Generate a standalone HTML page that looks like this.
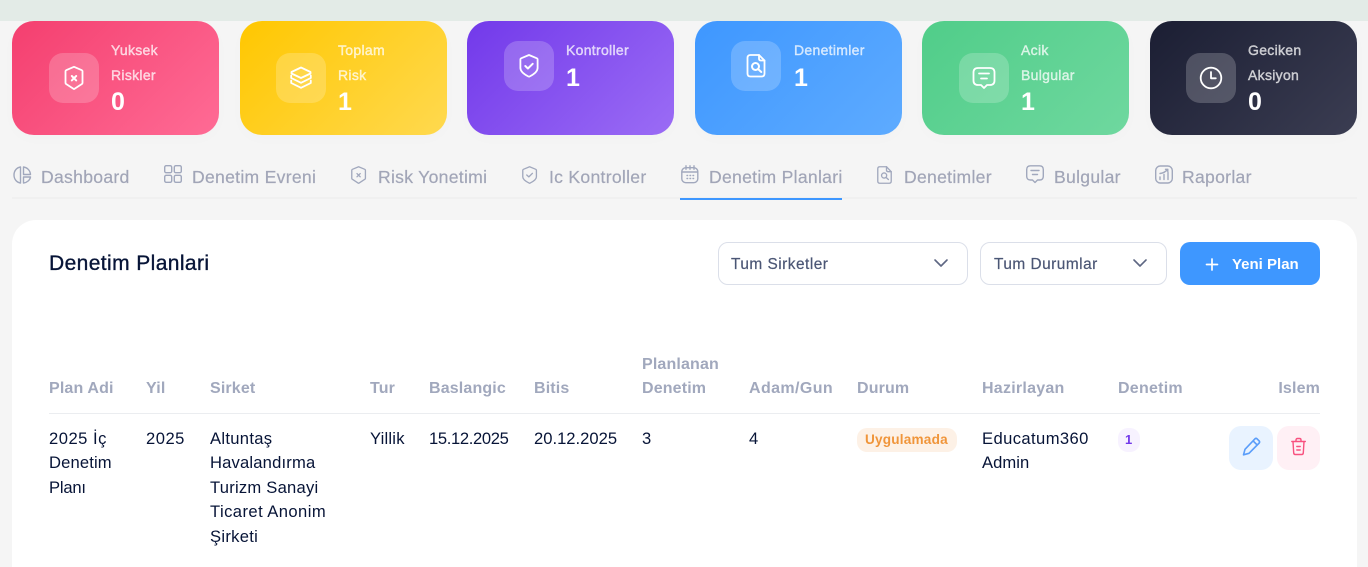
<!DOCTYPE html>
<html lang="tr"><head><meta charset="utf-8"><title>Denetim Planlari</title>
<style>
html,body{margin:0;padding:0;background:#f5f5f5;width:1368px;height:567px;overflow:hidden;}
body{position:relative;font-family:"Liberation Sans",sans-serif;}
#p{position:absolute;left:0;top:0;width:1368px;height:567px;overflow:hidden;}
.a{position:absolute;}
.t{position:absolute;white-space:nowrap;line-height:20px;height:20px;}
.card{position:absolute;top:21px;width:207px;height:114px;border-radius:22px;box-shadow:0 4px 14px rgba(0,0,0,.015);}
.ib{position:absolute;width:50px;height:50px;border-radius:14px;background:rgba(255,255,255,.2);}
.ib svg{position:absolute;left:10px;top:10px;}
.l{color:rgba(255,255,255,.7);font-size:14px;letter-spacing:.3px;-webkit-text-stroke:.4px rgba(255,255,255,.7);}
.v{color:#fff;font-size:25px;font-weight:700;}
.tab{color:#a1a5b7;font-size:17.6px;letter-spacing:.28px;-webkit-text-stroke:.2px #a1a5b7;}
.th{color:#a1a8bd;font-size:16px;font-weight:700;letter-spacing:.15px;}
.td{color:#071437;font-size:16.6px;letter-spacing:.2px;}
svg{display:block;overflow:visible;}
.w{fill:none;stroke:#fff;stroke-width:1.8;stroke-linecap:round;stroke-linejoin:round;}
.g{fill:none;stroke:#a1a8bd;stroke-width:1.4;stroke-linecap:round;stroke-linejoin:round;}
</style></head><body><div id="p">
<div class="a" style="left:0;top:0;width:1368px;height:21px;background:#e3ebe7"></div>

<div class="card" style="left:12px;background:linear-gradient(135deg,#f43f6f,#ff6b95)"></div>
<div class="ib" style="left:49px;top:53px"><svg width="30" height="30" viewBox="0 0 30 30" class="w"><path d="M15 3.800l7.800 3.400c.5.2.7.6.7 1.100v11.600c0 .5-.2.8-.6 1.100L15.600 25.800c-.4.2-.8.2-1.200 0L7.100 21c-.4-.3-.6-.6-.6-1.100V8.300c0-.5.2-.9.700-1.100z"/><path d="M12.800 13l4.400 4.400M17.200 13l-4.400 4.400" stroke-width="2"/></svg></div>
<div class="t l" style="left:111px;top:40px">Yuksek</div>
<div class="t l" style="left:111px;top:65px">Riskler</div>
<div class="t v" style="left:111px;top:92px">0</div>

<div class="card" style="left:240px;background:linear-gradient(135deg,#ffc700,#ffd94f)"></div>
<div class="ib" style="left:276px;top:53px"><svg width="30" height="30" viewBox="0 0 30 30" class="w"><path d="M15 4.500l9.500 4.500v1.500l-9.500 4.500-9.500-4.500V9z"/><path d="M5.200 12.500v2.500l9.800 4.800 9.800-4.800v-2.500"/><path d="M5.200 17.500v2.500l9.800 4.800 9.800-4.800v-2.500"/></svg></div>
<div class="t l" style="left:338px;top:40px">Toplam</div>
<div class="t l" style="left:338px;top:65px">Risk</div>
<div class="t v" style="left:338px;top:92px">1</div>

<div class="card" style="left:467px;background:linear-gradient(135deg,#7239ea,#9b6cf5)"></div>
<div class="ib" style="left:504px;top:41px"><svg width="30" height="30" viewBox="0 0 30 30" class="w"><path d="M15 4l7.900 3.300c.5.2.7.6.7 1.100v8.600c0 3.700-5.100 7-8 8.500-.4.200-.8.200-1.200 0-2.900-1.500-8-4.800-8-8.500V8.400c0-.5.200-.9.700-1.100z"/><path d="M11.300 15l2.600 2.500 4.800-4.700" stroke-width="2"/></svg></div>
<div class="t l" style="left:566px;top:40px">Kontroller</div>
<div class="t v" style="left:566px;top:68px">1</div>

<div class="card" style="left:695px;background:linear-gradient(135deg,#3e97ff,#5eabff)"></div>
<div class="ib" style="left:731px;top:41px"><svg width="30" height="30" viewBox="0 0 30 30" class="w"><path d="M18 4H9.500C7.500 4 6.500 5 6.500 7v15.500c0 2 1 3 3 3h11c2 0 3-1 3-3V9.500z"/><path d="M18 4v3.500c0 1.300.7 2 2 2h3.500"/><circle cx="14.500" cy="15.500" r="3.500" stroke-width="2"/><path d="M17 18l3.300 3" stroke-width="2"/></svg></div>
<div class="t l" style="left:794px;top:40px">Denetimler</div>
<div class="t v" style="left:794px;top:68px">1</div>

<div class="card" style="left:922px;background:linear-gradient(135deg,#50cd89,#6fd89f)"></div>
<div class="ib" style="left:959px;top:53px"><svg width="30" height="30" viewBox="0 0 30 30" class="w"><path d="M9 5h12c3 0 4.500 1.500 4.500 4.500v8c0 3-1.500 4.500-4.500 4.500h-3l-3 3-3-3H9c-3 0-4.500-1.500-4.500-4.500v-8C4.500 6.500 6 5 9 5z"/><path d="M10 10.500h10M12 15.500h6"/></svg></div>
<div class="t l" style="left:1021px;top:40px">Acik</div>
<div class="t l" style="left:1021px;top:65px">Bulgular</div>
<div class="t v" style="left:1021px;top:92px">1</div>

<div class="card" style="left:1150px;background:linear-gradient(135deg,#1b1e33,#3b3d52)"></div>
<div class="ib" style="left:1186px;top:53px"><svg width="30" height="30" viewBox="0 0 30 30" class="w"><circle cx="15" cy="15" r="10.300"/><path d="M15 9v6.300h4.800"/></svg></div>
<div class="t l" style="left:1248px;top:40px">Geciken</div>
<div class="t l" style="left:1248px;top:65px">Aksiyon</div>
<div class="t v" style="left:1248px;top:92px">0</div>

<div class="a" style="left:12px;top:197px;width:1345px;height:2px;background:#f0f0f0"></div>
<div class="a" style="left:680px;top:198px;width:162px;height:2px;background:#3e97ff"></div>

<svg class="a" style="left:13px;top:166px" width="20" height="18" viewBox="0 0 20 18"><path class="g" d="M7.500 1C4 1.500 1 4.500 1 9s3 7.500 6.500 8zM10.500 1v7.500h7c-.3-4-3.200-7-7-7.500zM10.500 17c3.500-.4 6.500-3 7-6h-7z"/></svg>
<div class="t tab" style="left:41px;top:167px">Dashboard</div>
<svg class="a" style="left:164px;top:165px" width="18" height="18" viewBox="0 0 18 18"><rect class="g" x=".7" y=".7" width="7" height="7" rx="1.500"/><rect class="g" x="10.300" y=".7" width="7" height="7" rx="1.500"/><rect class="g" x=".7" y="10.300" width="7" height="7" rx="1.500"/><rect class="g" x="10.300" y="10.300" width="7" height="7" rx="1.500"/></svg>
<div class="t tab" style="left:192px;top:167px">Denetim Evreni</div>
<svg class="a" style="left:351px;top:166px" width="15.200" height="18" viewBox="0 0 16 19"><path class="g" d="M8 .8l6.500 2.700c.4.200.7.500.7 1v8.500c0 .5-.3.800-.7 1.100L8.500 18c-.3.200-.7.200-1 0l-6-3.900c-.4-.3-.7-.6-.7-1.100V4.500c0-.5.300-.8.700-1z"/><path class="g" d="M6.300 8l3.400 3.400M9.700 8l-3.400 3.400"/></svg>
<div class="t tab" style="left:378px;top:167px">Risk Yonetimi</div>
<svg class="a" style="left:522px;top:166px" width="15.200" height="18" viewBox="0 0 16 19"><path class="g" d="M8 .8l6.500 2.700c.4.200.7.500.7 1v7c0 2.800-3.800 5.100-6.700 6.500-.3.200-.7.200-1 0C4.600 16.600.800 14.300.800 11.500v-7c0-.5.300-.8.700-1z"/><path class="g" d="M5 9.500l2.200 2 3.800-3.800"/></svg>
<div class="t tab" style="left:549px;top:167px">Ic Kontroller</div>
<svg class="a" style="left:681px;top:165px" width="18" height="19" viewBox="0 0 18 19"><rect class="g" x=".8" y="2.700" width="16" height="15" rx="4"/><path class="g" d="M1 7h15.600M5 .8v3.500M9 .8v3.500M13 .8v3.500M6 10.500h.6M9 10.500h.6M12 10.500h.6M6 13.500h.6M9 13.500h.6M12 13.500h.6"/></svg>
<div class="t tab" style="left:709px;top:167px">Denetim Planlari</div>
<svg class="a" style="left:877px;top:166px" width="15.200" height="18" viewBox="0 0 16 19"><path class="g" d="M10 .8H3C1.500.8.800 1.500.8 3v13c0 1.500.7 2.200 2.200 2.200h9.800c1.500 0 2.200-.7 2.200-2.200V6z"/><path class="g" d="M10 .8v3.400c0 1.200.6 1.800 1.800 1.800H15"/><circle class="g" cx="7.500" cy="10" r="2.700"/><path class="g" d="M9.500 12l2.500 2.300"/></svg>
<div class="t tab" style="left:904px;top:167px">Denetimler</div>
<svg class="a" style="left:1026px;top:165px" width="18" height="19" viewBox="0 0 18 19"><path class="g" d="M4.500.8h9c2.500 0 3.800 1.300 3.800 3.800v6.600c0 2.500-1.300 3.800-3.800 3.800h-2L9 17.500 6.500 15h-2C2 15 .7 13.700.7 11.200V4.600C.7 2.100 2 .8 4.500.8z"/><path class="g" d="M5 5.500h8M6.500 9.500h5"/></svg>
<div class="t tab" style="left:1054px;top:167px">Bulgular</div>
<svg class="a" style="left:1155px;top:165px" width="18" height="19" viewBox="0 0 18 19"><rect class="g" x=".7" y="1" width="16.600" height="17" rx="4.500"/><path class="g" d="M5 14.500v-2.500M9 14.500V9.500M13 14.500V7.500M5 8.500c3-.3 5.500-1.600 7.500-4M10.500 4.300h2.300v2.300"/></svg>
<div class="t tab" style="left:1182px;top:167px">Raporlar</div>

<div class="a" style="left:12px;top:220px;width:1345px;height:347px;background:#fff;border-radius:24px 24px 0 0"></div>
<div class="t" style="left:49px;top:254px;color:#071437;font-size:21px;letter-spacing:.4px;-webkit-text-stroke:.35px #071437">Denetim Planlari</div>

<div class="a" style="left:718px;top:242px;width:248px;height:41px;border:1px solid #dbdfe9;border-radius:10px;background:#fff"></div>
<div class="t" style="left:731px;top:254px;padding-top:1px;color:#4b5675;font-size:15.4px;letter-spacing:.5px;-webkit-text-stroke:.2px #4b5675">Tum Sirketler</div>
<svg class="a" style="left:933px;top:258px" width="16" height="11" viewBox="0 0 16 11"><path d="M2 2l6 6 6-6" fill="none" stroke="#5e6783" stroke-width="1.600" stroke-linecap="round" stroke-linejoin="round"/></svg>
<div class="a" style="left:980px;top:242px;width:185px;height:41px;border:1px solid #dbdfe9;border-radius:10px;background:#fff"></div>
<div class="t" style="left:994px;top:254px;padding-top:1px;color:#4b5675;font-size:15.4px;letter-spacing:.5px;-webkit-text-stroke:.2px #4b5675">Tum Durumlar</div>
<svg class="a" style="left:1132px;top:258px" width="16" height="11" viewBox="0 0 16 11"><path d="M2 2l6 6 6-6" fill="none" stroke="#5e6783" stroke-width="1.600" stroke-linecap="round" stroke-linejoin="round"/></svg>
<div class="a" style="left:1180px;top:242px;width:140px;height:43px;border-radius:10px;background:#3e97ff"></div>
<svg class="a" style="left:1205px;top:258px" width="14" height="14" viewBox="0 0 14 14"><path d="M7 1v11M1.500 6.500h11" fill="none" stroke="#fff" stroke-width="1.700" stroke-linecap="round"/></svg>
<div class="t" style="left:1232px;top:255px;color:#fff;font-size:15px;font-weight:700">Yeni Plan</div>

<div class="t th" style="left:49px;top:379px">Plan Adi</div>
<div class="t th" style="left:146px;top:379px">Yil</div>
<div class="t th" style="left:210px;top:379px">Sirket</div>
<div class="t th" style="left:370px;top:379px">Tur</div>
<div class="t th" style="left:429px;top:379px">Baslangic</div>
<div class="t th" style="left:534px;top:379px">Bitis</div>
<div class="t th" style="left:642px;top:355px">Planlanan</div>
<div class="t th" style="left:642px;top:379px">Denetim</div>
<div class="t th" style="left:749px;top:379px;letter-spacing:.4px">Adam/Gun</div>
<div class="t th" style="left:857px;top:379px">Durum</div>
<div class="t th" style="left:982px;top:379px;letter-spacing:.25px">Hazirlayan</div>
<div class="t th" style="left:1118px;top:379px;letter-spacing:.25px">Denetim</div>
<div class="t th" style="right:48px;top:379px">Islem</div>
<div class="a" style="left:49px;top:413px;width:1271px;height:1px;background:#ebedf0"></div>

<div class="t td" style="left:49px;top:429px;letter-spacing:.5px">2025 İç</div>
<div class="t td" style="left:49px;top:453px;letter-spacing:.14px">Denetim</div>
<div class="t td" style="left:49px;top:478px;letter-spacing:-.2px">Planı</div>
<div class="t td" style="left:146px;top:429px;letter-spacing:.5px">2025</div>
<div class="t td" style="left:210px;top:429px;letter-spacing:.3px">Altuntaş</div>
<div class="t td" style="left:210px;top:453px;letter-spacing:.17px">Havalandırma</div>
<div class="t td" style="left:210px;top:478px;letter-spacing:.23px">Turizm Sanayi</div>
<div class="t td" style="left:210px;top:502px;letter-spacing:.43px">Ticaret Anonim</div>
<div class="t td" style="left:210px;top:527px;letter-spacing:.28px">Şirketi</div>
<div class="t td" style="left:370px;top:429px">Yillik</div>
<div class="t td" style="left:429px;top:429px;letter-spacing:-.35px">15.12.2025</div>
<div class="t td" style="left:534px;top:429px;letter-spacing:0">20.12.2025</div>
<div class="t td" style="left:642px;top:429px">3</div>
<div class="t td" style="left:749px;top:429px">4</div>
<div class="a" style="left:857px;top:428px;width:100px;height:24px;border-radius:10px;background:#fdf1e6"></div>
<div class="t" style="left:865px;top:430px;color:#f0953a;font-size:13.6px;font-weight:700;letter-spacing:.2px">Uygulamada</div>
<div class="t td" style="left:982px;top:429px;letter-spacing:.4px">Educatum360</div>
<div class="t td" style="left:982px;top:453px;letter-spacing:.05px">Admin</div>
<div class="a" style="left:1118px;top:428px;width:22px;height:24px;border-radius:10px;background:#f7f2ff"></div>
<div class="t" style="left:1125px;top:430px;color:#7239ea;font-size:13px;font-weight:700">1</div>
<div class="a" style="left:1229px;top:426px;width:44px;height:44px;border-radius:12px;background:#e9f3ff"></div>
<svg class="a" style="left:1241px;top:437px" width="20" height="20" viewBox="0 0 20 20"><path d="M14 1.800c.6-.5 1.400-.5 2 0l2.200 2.200c.5.600.5 1.400 0 2L8 16.300l-5.500 1.500 1.500-5.500zM12 3.800l4.200 4.200" fill="none" stroke="#5a9dfa" stroke-width="1.600" stroke-linejoin="round" stroke-linecap="round"/></svg>
<div class="a" style="left:1277px;top:426px;width:43px;height:44px;border-radius:12px;background:#fff0f5"></div>
<svg class="a" style="left:1290px;top:437px" width="18" height="20" viewBox="0 0 18 20"><path d="M1.800 4.500h13.500M6 4.500V3c0-1 .6-1.500 1.500-1.500h2c1 0 1.500.5 1.500 1.500v1.500M3 4.500l.7 11.500c.1 1 .7 1.500 1.600 1.500h6.400c1 0 1.500-.5 1.600-1.500L14 4.500M6.800 9.500h3.400M6.800 13h3.400" fill="none" stroke="#f8517f" stroke-width="1.400" stroke-linecap="round" stroke-linejoin="round"/></svg>
</div></body></html>
